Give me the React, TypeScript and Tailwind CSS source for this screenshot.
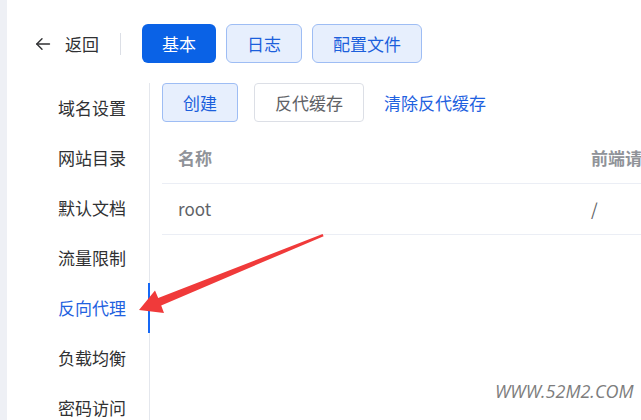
import React from "react";

const FONT = "font-['Noto_Sans_CJK_SC','Noto_Sans',sans-serif]";

const navItems = ["域名设置", "网站目录", "默认文档", "流量限制", "反向代理", "负载均衡", "密码访问"];

function BackArrow() {
  return (
    <svg width="16" height="16" viewBox="0 0 16 16" fill="none" stroke="#303133" strokeWidth="1.4" strokeLinecap="round" strokeLinejoin="round">
      <path d="M14.5 8H1.8" />
      <path d="M7 2.8L1.8 8L7 13.2" />
    </svg>
  );
}

function PointerArrow() {
  return (
    <svg className="absolute left-0 top-0 pointer-events-none" width="641" height="420" viewBox="0 0 641 420">
      <polygon
        points="139,310 155,290.5 158.2,298 322.6,234 323.6,236.2 161.2,305.4 164,313"
        fill="#f03a3a"
      />
    </svg>
  );
}

export default function App() {
  return (
    <div className={`relative w-[641px] h-[420px] overflow-hidden flex bg-white ${FONT}`}>
      <div className="w-[7px] shrink-0 bg-[#eef0f5]" />
      <div className="flex-1 flex flex-col min-w-0">
        {/* top bar */}
        <div className="flex items-center pt-[24px] pl-[28px] h-[63px]">
          <div className="flex items-center gap-[14px] text-[17px] text-[#303133]">
            <BackArrow />
            <span>返回</span>
          </div>
          <div className="w-px h-[22px] bg-[#dcdfe6] ml-[21px] mr-[21px]" />
          <div className="flex items-center gap-[10px]">
            <button className="h-[39px] px-[20px] rounded-[6px] bg-[#0a62e6] text-white text-[17px]">基本</button>
            <button className="h-[39px] px-[20px] rounded-[6px] bg-[#e7effd] border border-[#9ebdf4] text-[#1c5fdc] text-[17px]">日志</button>
            <button className="h-[39px] px-[20px] rounded-[6px] bg-[#e7effd] border border-[#9ebdf4] text-[#1c5fdc] text-[17px]">配置文件</button>
          </div>
        </div>

        <div className="flex flex-1 mt-[20px]">
          {/* side nav */}
          <div className="w-[143px] shrink-0 flex flex-col">
            {navItems.map((item) => {
              const active = item === "反向代理";
              return (
                <div key={item} className="h-[50px] shrink-0 flex">
                  <div
                    className={`flex-1 flex items-center pl-[51px] text-[17px] ${
                      active ? "text-[#1f62e0]" : "text-[#303133]"
                    }`}
                  >
                    {item}
                  </div>
                  <div className={active ? "w-[2px] -ml-px bg-[#1668f5]" : "w-px bg-[#e4e7ed]"} />
                </div>
              );
            })}
            <div className="flex-1 flex justify-end">
              <div className="w-px bg-[#e4e7ed]" />
            </div>
          </div>

          {/* content */}
          <div className="flex-1 min-w-0 pl-[12px] overflow-hidden">
            <div className="flex items-center h-[39px]">
              <button className="h-[39px] px-[20px] rounded-[4px] bg-[#e7effd] border border-[#9ebdf4] text-[#1c5fdc] text-[17px]">创建</button>
              <button className="ml-[16px] h-[39px] px-[20px] rounded-[4px] bg-white border border-[#dcdfe6] text-[#606266] text-[17px]">反代缓存</button>
              <span className="ml-[20px] text-[#1f62e0] text-[17px]">清除反代缓存</span>
            </div>
            <div className="mt-[10px] w-[700px]">
              <div className="flex h-[52px] items-center border-b border-[#ebeef5] text-[17px] font-bold text-[#909399]">
                <div className="w-[413px] pl-[16px]">名称</div>
                <div className="pl-[16px] whitespace-nowrap">前端请求路径</div>
              </div>
              <div className="flex h-[51px] items-center border-b border-[#ebeef5] text-[17px] text-[#606266]">
                <div className="w-[413px] pl-[16px]">root</div>
                <div className="pl-[16px]">/</div>
              </div>
            </div>
          </div>
        </div>
      </div>

      <PointerArrow />
      <div className="absolute left-[495px] top-[378px] text-[18px] italic text-[#7d7d7d] font-['Open_Sans',sans-serif]">
        WWW.52M2.COM
      </div>
    </div>
  );
}
